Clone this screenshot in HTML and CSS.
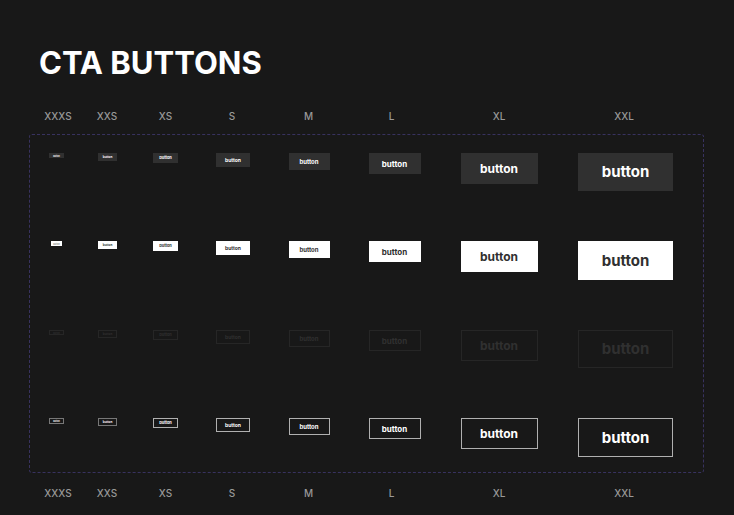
FILE: index.html
```
<!DOCTYPE html>
<html lang="en">
<head>
  <meta charset="UTF-8">
  <meta name="viewport" content="width=device-width, initial-scale=1">
  <title>CTA Buttons</title>
  <link rel="stylesheet" href="styles.css">
</head>
<body>
  <main class="sheet">
    <h1 class="title">CTA BUTTONS</h1>

    <div class="sizes">
      <span>XXXS</span><span>XXS</span><span>XS</span><span>S</span><span>M</span><span>L</span><span>XL</span><span>XXL</span>
    </div>

    <section class="frame">
      <div class="row">
        <button class="btn dark xxxs">button</button>
        <button class="btn dark xxs">button</button>
        <button class="btn dark xs">button</button>
        <button class="btn dark s">button</button>
        <button class="btn dark m">button</button>
        <button class="btn dark l">button</button>
        <button class="btn dark xl">button</button>
        <button class="btn dark xxl">button</button>
      </div>
      <div class="row tall">
        <button class="btn light xxxs">button</button>
        <button class="btn light xxs">button</button>
        <button class="btn light xs">button</button>
        <button class="btn light s">button</button>
        <button class="btn light m">button</button>
        <button class="btn light l">button</button>
        <button class="btn light xl">button</button>
        <button class="btn light xxl">button</button>
      </div>
      <div class="row">
        <button class="btn ghost xxxs">button</button>
        <button class="btn ghost xxs">button</button>
        <button class="btn ghost xs">button</button>
        <button class="btn ghost s">button</button>
        <button class="btn ghost m">button</button>
        <button class="btn ghost l">button</button>
        <button class="btn ghost xl">button</button>
        <button class="btn ghost xxl">button</button>
      </div>
      <div class="row tall">
        <button class="btn outline xxxs">button</button>
        <button class="btn outline xxs">button</button>
        <button class="btn outline xs">button</button>
        <button class="btn outline s">button</button>
        <button class="btn outline m">button</button>
        <button class="btn outline l">button</button>
        <button class="btn outline xl">button</button>
        <button class="btn outline xxl">button</button>
      </div>
    </section>

    <div class="sizes">
      <span>XXXS</span><span>XXS</span><span>XS</span><span>S</span><span>M</span><span>L</span><span>XL</span><span>XXL</span>
    </div>
  </main>
</body>
</html>
```
FILE: styles.css
```
* { box-sizing: border-box; }
body { margin: 0; background: #181818; color: #fff; font-family: Inter, Lato, sans-serif; }

.sheet { padding: 43px 30px 0 29px; }
.title { margin: 0 0 25px 10px; font-size: 31px; line-height: 40px; font-weight: 700; }

/* size labels above and below the frame */
.sizes { display: grid; grid-template-columns: 46fr 52fr 65fr 68fr 85fr 81fr 134fr 116fr; padding: 0 22px 0 6px; font-size: 10px; line-height: 16px; font-weight: 500; color: #999; text-align: center; }

.frame { display: grid; row-gap: 50px; margin: 10px 0 12px; padding: 18px 7px 15px 5px; border: 1px dashed #38325f; border-radius: 3px; }
.row { display: grid; grid-template-columns: 43fr 59fr 57fr 78fr 74fr 97fr 112fr 141fr; justify-items: center; align-items: start; }

/* buttons */
.btn { display: flex; align-items: center; justify-content: center; padding: 0; border: 1px solid transparent; border-radius: 0; font-family: inherit; font-weight: 700; line-height: 1; cursor: pointer; }
.dark { background: #303030; color: #fff; }
.light { background: #fff; color: #303030; }
.ghost { background: transparent; border-color: #262626; color: #303030; }
.outline { background: transparent; border-color: #b0b0b0; color: #fff; }

.xxxs { width: 15px; height: 5px; font-size: 2px; }
.xxs { width: 19px; height: 8px; font-size: 3px; }
.xs { width: 25px; height: 10px; font-size: 4px; }
.s { width: 34px; height: 14px; font-size: 5px; }
.m { width: 41px; height: 17px; font-size: 6px; }
.l { width: 52px; height: 21px; font-size: 8px; }
.xl { width: 77px; height: 31px; font-size: 12px; }
.xxl { width: 95px; height: 38px; padding-bottom: 1px; font-size: 15px; }
.tall .xxl { height: 39px; }
.light.xxxs { width: 11px; color: #888; }
.outline.xxxs { height: 6px; border-color: #777; }
.outline.xxs { border-color: #777; }
```
